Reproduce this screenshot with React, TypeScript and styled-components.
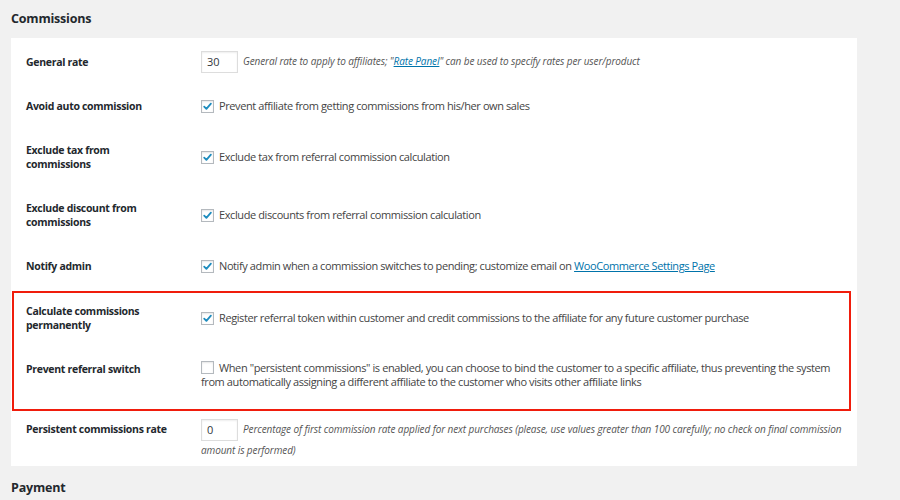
import React from 'react';
import styled, { createGlobalStyle } from 'styled-components';

const GlobalStyle = createGlobalStyle`
  html, body {
    margin: 0;
    padding: 0;
    background: #f1f1f1;
  }
  body {
    font-family: "Open Sans", "Noto Sans", sans-serif;
    color: #444;
    -webkit-font-smoothing: antialiased;
  }
`;

const Page = styled.div`
  width: 900px;
  height: 500px;
  overflow: hidden;
  padding: 0 43px 0 11px;
  box-sizing: border-box;
`;

const SectionTitle = styled.h2<{ $top?: number }>`
  margin: 0;
  padding: ${(p) => p.$top ?? 10}px 0 0;
  height: 28px;
  font-size: 12.5px;
  line-height: 18px;
  font-weight: 700;
  letter-spacing: -0.2px;
  color: #23282d;
`;

const Panel = styled.div`
  background: #fff;
  display: flex;
  flex-direction: column;
  padding-top: 2px;
`;

const Highlight = styled.div`
  border: 2px solid #f01d0c;
  margin: 3px 6px -4px 1px;
`;

const Row = styled.div<{ $inset?: boolean }>`
  display: grid;
  grid-template-columns: ${(p) => (p.$inset ? '187px' : '190px')} 1fr;
`;

const Label = styled.div<{ $inset?: boolean; $top?: number }>`
  align-self: start;
  padding: ${(p) => p.$top ?? 15}px 27px 15px ${(p) => (p.$inset ? '12px' : '15px')};
  font-size: 10.5px;
  line-height: 14px;
  font-weight: 700;
  letter-spacing: -0.3px;
  color: #23282d;
`;

const Control = styled.div<{ $pad?: string }>`
  align-self: center;
  padding: ${(p) => p.$pad ?? '11px 12px 11px 0'};
  font-size: 11px;
  line-height: 14px;
  letter-spacing: -0.4px;
  color: #444;
`;

const NumberBox = styled.span`
  display: inline-block;
  box-sizing: border-box;
  width: 37px;
  height: 22px;
  border: 1px solid #ddd;
  box-shadow: inset 0 1px 2px rgba(0, 0, 0, 0.07);
  padding: 0 5px;
  font-size: 11px;
  line-height: 20px;
  letter-spacing: 0;
  color: #32373c;
  vertical-align: middle;
  margin-right: 5px;
`;

const Description = styled.span`
  font-style: italic;
  font-size: 10px;
  line-height: 18px;
  letter-spacing: -0.1px;
  color: #555;
`;

const Link = styled.a`
  color: #0073aa;
  text-decoration: underline;
`;

const Box = styled.span`
  display: inline-flex;
  align-items: center;
  justify-content: center;
  box-sizing: border-box;
  width: 13px;
  height: 13px;
  border: 1px solid #b4b9be;
  background: #fff;
  box-shadow: inset 0 1px 2px rgba(0, 0, 0, 0.1);
  vertical-align: -2px;
  margin-right: 5px;
`;

function Checkbox({ checked }: { checked?: boolean }) {
  return (
    <Box>
      {checked && (
        <svg width="11" height="11" viewBox="0 0 11 11">
          <path d="M2.2 5.6 L4.4 7.9 L8.9 2.6" fill="none" stroke="#1e8cbe" strokeWidth="1.8" strokeLinecap="round" strokeLinejoin="round" />
        </svg>
      )}
    </Box>
  );
}

export default function App() {
  return (
    <Page>
      <GlobalStyle />
      <SectionTitle>Commissions</SectionTitle>
      <Panel>
        <Row>
          <Label>General rate</Label>
          <Control>
            <NumberBox>30</NumberBox>
            <Description>
              General rate to apply to affiliates; "<Link href="#">Rate Panel</Link>" can be used to specify rates per user/product
            </Description>
          </Control>
        </Row>
        <Row>
          <Label>Avoid auto commission</Label>
          <Control>
            <Checkbox checked />
            Prevent affiliate from getting commissions from his/her own sales
          </Control>
        </Row>
        <Row>
          <Label>Exclude tax from commissions</Label>
          <Control>
            <Checkbox checked />
            Exclude tax from referral commission calculation
          </Control>
        </Row>
        <Row>
          <Label>Exclude discount from commissions</Label>
          <Control>
            <Checkbox checked />
            Exclude discounts from referral commission calculation
          </Control>
        </Row>
        <Row>
          <Label>Notify admin</Label>
          <Control>
            <Checkbox checked />
            Notify admin when a commission switches to pending; customize email on{' '}
            <Link href="#">WooCommerce Settings Page</Link>
          </Control>
        </Row>
        <Highlight>
          <Row $inset>
            <Label $inset $top={11}>Calculate commissions permanently</Label>
            <Control $pad="8px 12px 12px 0">
              <Checkbox checked />
              Register referral token within customer and credit commissions to the affiliate for any future customer purchase
            </Control>
          </Row>
          <Row $inset>
            <Label $inset>Prevent referral switch</Label>
            <Control $pad="14px 8px 20px 0">
              <Checkbox />
              When "persistent commissions" is enabled, you can choose to bind the customer to a specific affiliate, thus preventing the system from automatically assigning a different affiliate to the customer who visits other affiliate links
            </Control>
          </Row>
        </Highlight>
        <Row>
          <Label>Persistent commissions rate</Label>
          <Control $pad="12px 10px 7px 0">
            <NumberBox>0</NumberBox>
            <Description>
              Percentage of first commission rate applied for next purchases (please, use values greater than 100 carefully; no check on final commission amount is performed)
            </Description>
          </Control>
        </Row>
      </Panel>
      <SectionTitle $top={13}>Payment</SectionTitle>
    </Page>
  );
}
